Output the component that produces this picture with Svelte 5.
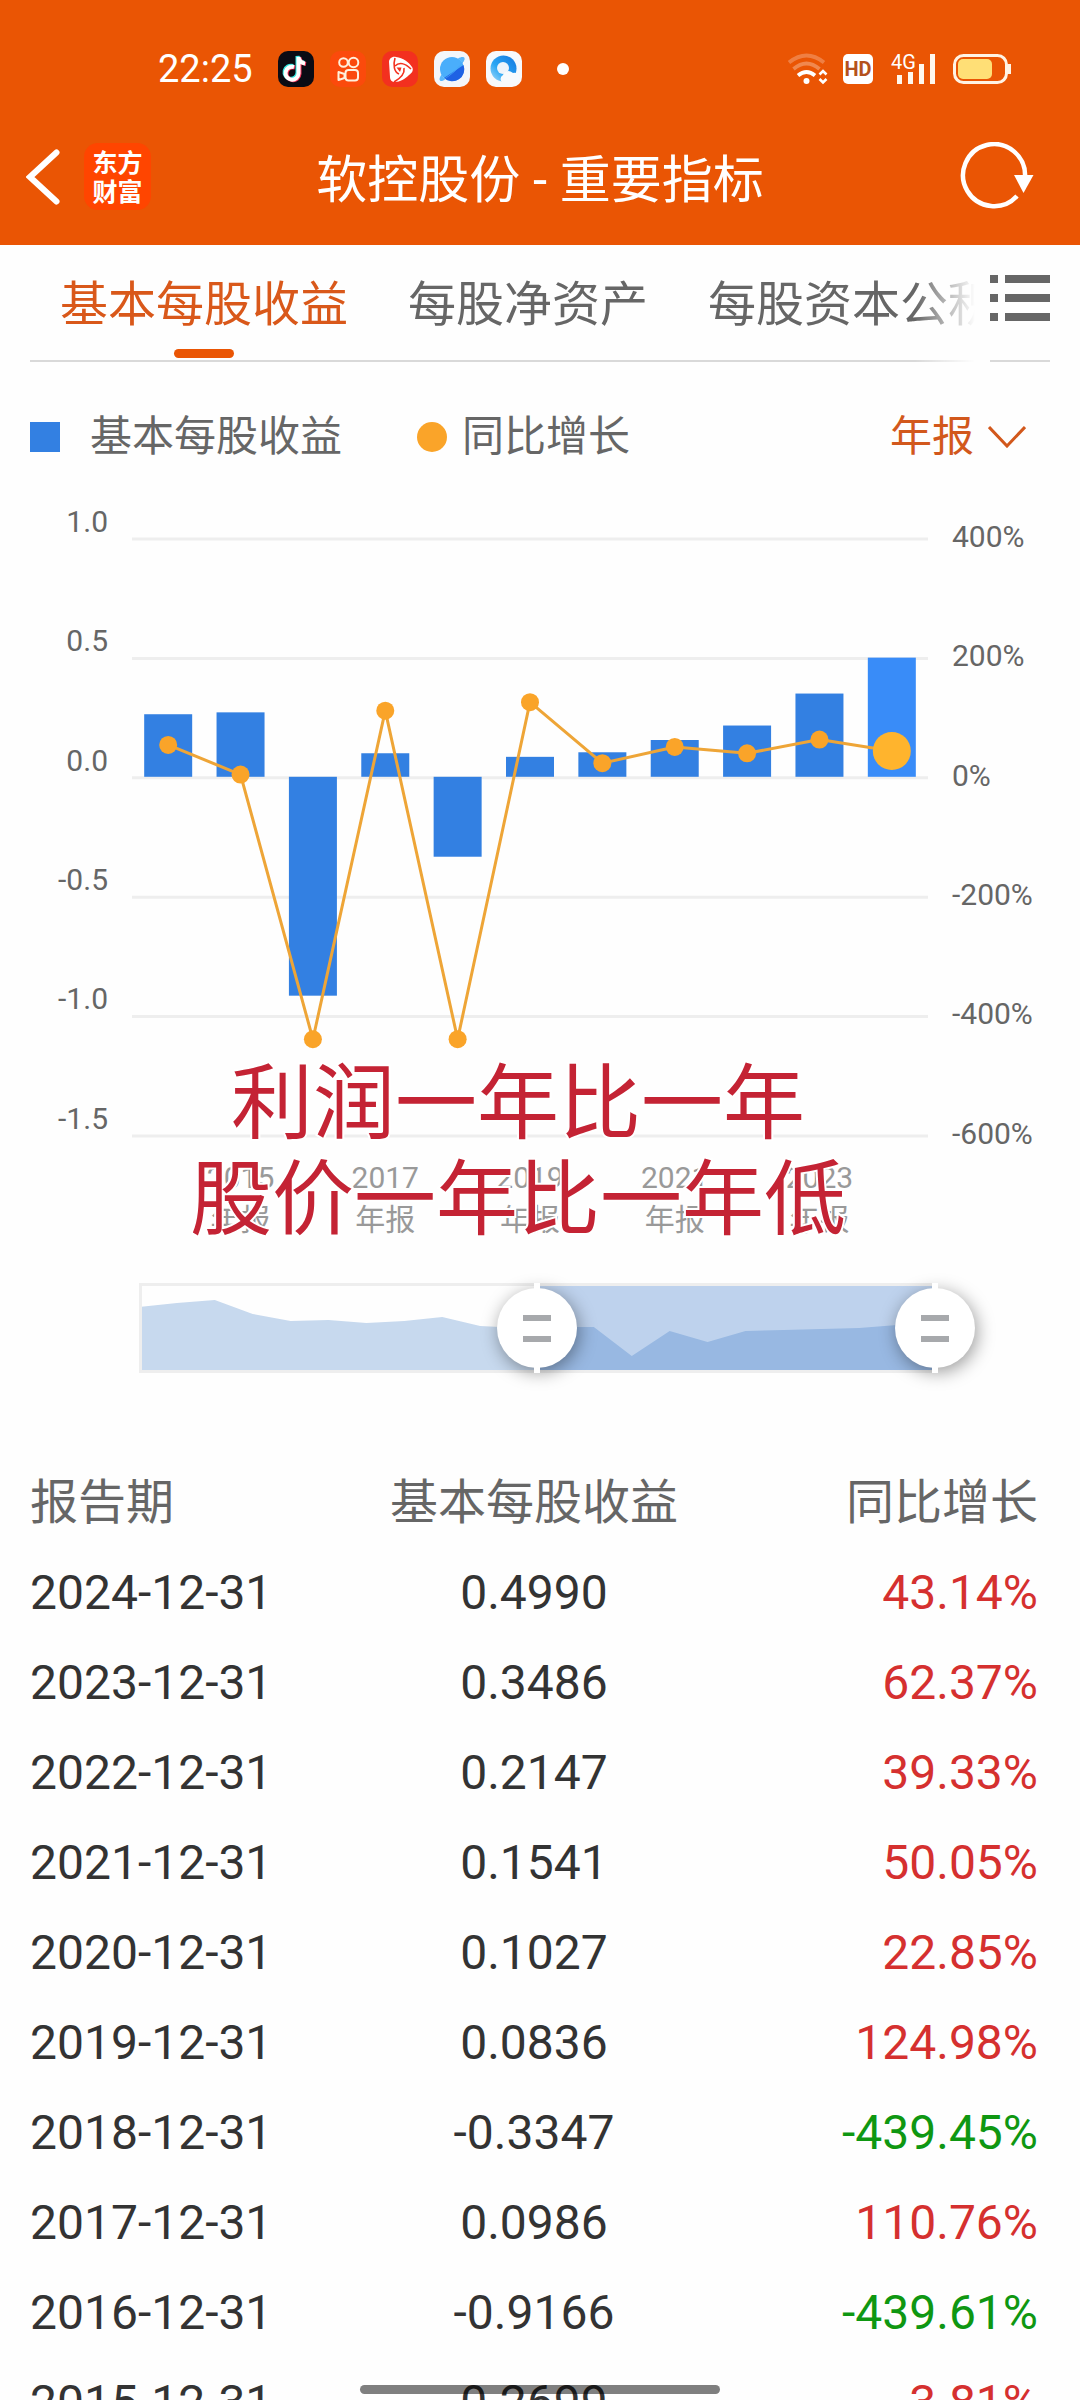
<script>
  const tabs = ['基本每股收益', '每股净资产', '每股资本公积金'];
  let active = $state(0);
  let period = $state('年报');
  let from = $state(50);
  let to = $state(100);

  const series = [
    { year: 2014, eps: 0.262, growth: 53.3 },
    { year: 2015, eps: 0.2699, growth: 3.81 },
    { year: 2016, eps: -0.9166, growth: -439.61 },
    { year: 2017, eps: 0.0986, growth: 110.76 },
    { year: 2018, eps: -0.3347, growth: -439.45 },
    { year: 2019, eps: 0.0836, growth: 124.98 },
    { year: 2020, eps: 0.1027, growth: 22.85 },
    { year: 2021, eps: 0.1541, growth: 50.05 },
    { year: 2022, eps: 0.2147, growth: 39.33 },
    { year: 2023, eps: 0.3486, growth: 62.37 },
    { year: 2024, eps: 0.499, growth: 43.14 }
  ];
  const rows = series.slice(1).reverse();
  const epsTicks = ['1.0', '0.5', '0.0', '-0.5', '-1.0', '-1.5'];
  const growthTicks = ['400%', '200%', '0%', '-200%', '-400%', '-600%'];

  // Vertical scale of the plot: one grid step is 0.5 of EPS or 200% of growth.
  const step = 119.4;
  const zero = 2 * step + 1;
  const epsY = (v) => zero - v * 2 * step;
  const growthY = (v) => zero - (v / 200) * step;
  const centre = (i) => ((i + 0.5) / series.length) * 100;

  const overview = [24, 20, 17, 31, 38, 37, 40, 38, 34, 43, 45, 44, 44, 73, 48, 59, 48, 47, 46, 45, 42, 37];
  const areaPath =
    'M0 90 ' + overview.map((y, i) => `L${i} ${y}`).join(' ') + ` L${overview.length - 1} 90 Z`;
</script>

<div class="app">
  <header>
    <div class="status">
      <time>22:25</time>
      <div class="apps">
        <svg viewBox="0 0 36 36" aria-hidden="true">
          <rect width="36" height="36" rx="10" fill="#0b0b14" />
          <g fill="none" stroke-width="4">
            <path d="M18 15.500a6.500 6.500 0 1 0 4.500 6.500V5.500c.5 4 3 6 6.500 6.500" transform="translate(-3 -0.500)" stroke="#35e6e0" />
            <path d="M18 15.500a6.500 6.500 0 1 0 4.500 6.500V5.500c.5 4 3 6 6.500 6.500" transform="translate(-1 1)" stroke="#f5345c" />
            <path d="M18 15.500a6.500 6.500 0 1 0 4.500 6.500V5.500c.5 4 3 6 6.500 6.500" transform="translate(-2 0.500)" stroke="#fff" />
          </g>
        </svg>
        <svg viewBox="0 0 36 36" aria-hidden="true">
          <rect width="36" height="36" rx="10" fill="#fb4a0c" />
          <g fill="none" stroke="#fff0dc" stroke-width="2">
            <circle cx="13.500" cy="11.500" r="4.300" />
            <circle cx="23.500" cy="11.500" r="4.800" />
            <rect x="15.500" y="19" width="12.500" height="10.500" rx="3" />
            <path d="M14.500 23l-6-2v8l6-2z" stroke-linejoin="round" />
          </g>
        </svg>
        <svg viewBox="0 0 36 36" aria-hidden="true">
          <rect width="36" height="36" rx="10" fill="#f3301f" />
          <path d="M7 11c0-3 3-6 7-5 7 1 13 5 16 10 2 3 0 6-3 8-4 4-9 7-14 7-3 0-5-2-5-5z" fill="#fff" />
          <g fill="none" stroke="#f3301f" stroke-width="1.600">
            <path d="M13 15c4-4 10-3 16 3" />
            <path d="M22 17c1 6-3 10-10 14" />
            <path d="M17 23c-5-2-6-9-4-16" />
          </g>
          <path d="M14.500 16.500l5 0-1.500 4.500z" fill="#f3301f" />
        </svg>
        <svg viewBox="0 0 36 36" aria-hidden="true">
          <rect width="36" height="36" rx="10" fill="#f4f6fa" />
          <circle cx="18" cy="18" r="12" fill="#4aaefb" />
          <path d="M29.500 14A12 12 0 0 1 10 27z" fill="#1f62e4" />
          <path d="M30 7c1 3-4 9-11 15S7 30 6 29c2 0 6-2 12-7S29 11 30 7z" fill="#45a8fa" />
          <path d="M24 7.500c3-2 6-2 6.500-.5s-.5 3-2 5zM7.500 23.500c-2 3-2.500 5-1.500 6s3 .5 5-1z" fill="#5bb7fb" />
        </svg>
        <svg viewBox="0 0 36 36" aria-hidden="true">
          <defs>
            <linearGradient id="ring" x1="1" y1="0" x2="0" y2="1">
              <stop offset="0.200" stop-color="#1b86e6" />
              <stop offset="0.600" stop-color="#2aa6f4" />
              <stop offset="1" stop-color="#a9dcfa" />
            </linearGradient>
          </defs>
          <rect width="36" height="36" rx="10" fill="#f7f9fc" />
          <circle cx="17.500" cy="17.500" r="13" fill="url(#ring)" />
          <circle cx="17" cy="17" r="6" fill="#eef4fb" />
          <path d="M17 32a4.500 4.500 0 0 1 0-8 6 6 0 0 1 10-2 5 5 0 0 1 3 10z" fill="#f7fafd" />
        </svg>
      </div>
      <span class="dot"></span>
      <div class="system">
        <svg class="wifi" viewBox="0 0 40 32" aria-hidden="true">
          <g fill="none" stroke="#fff" stroke-width="3.800">
            <path d="M1 9.500q17.500-14 35 0" opacity=".25" />
            <path d="M5.500 16q13-11 26 0" opacity=".3" />
            <path d="M10 22.500q8.500-7 17 0" />
            <path d="M31.500 21.500l3.500-3.500 3.500 3.500M31.500 26l3.500 3.500 3.500-3.500" stroke-width="2.600" />
          </g>
          <circle cx="18.500" cy="28" r="3" fill="#fff" />
        </svg>
        <span class="hd">HD</span>
        <span class="cell">
          <small>4G</small>
          <svg viewBox="0 0 44 30" aria-hidden="true">
            <path d="M8.500 30v-9M19.500 30V18M30.500 30V10M41.500 30V0" stroke="#fff8ee" stroke-width="5" />
          </svg>
        </span>
        <svg class="battery" viewBox="0 0 58 32" aria-hidden="true">
          <rect x="1.500" y="2.500" width="52" height="27" rx="9" fill="none" stroke="#fff3e4" stroke-width="3" />
          <rect x="5" y="6" width="34" height="20" rx="5" fill="#ffdf76" />
          <path d="M56.500 11v10" stroke="#fff3e4" stroke-width="3" />
        </svg>
      </div>
    </div>
    <div class="bar">
      <div class="lead">
        <button class="back" aria-label="返回">
          <svg viewBox="0 0 34 56" aria-hidden="true">
            <path d="M30.500 3.500L4 28l26.500 24.500" fill="none" stroke="#fff" stroke-width="6" stroke-linecap="round" stroke-linejoin="miter" />
          </svg>
        </button>
        <span class="logo">东方<br />财富</span>
      </div>
      <h1>软控股份 - 重要指标</h1>
      <button class="refresh" aria-label="刷新">
        <svg viewBox="0 0 74 70" aria-hidden="true">
          <path d="M57 54A31 31 0 1 1 65 35" fill="none" stroke="#fff" stroke-width="4.500" />
          <path d="M54 33h19.500L63.500 51z" fill="#fff" />
        </svg>
      </button>
    </div>
  </header>

  <nav>
    <div class="tabs">
      {#each tabs as tab, i}
        <button class:active={active === i} onclick={() => (active = i)}>{tab}</button>
      {/each}
    </div>
    <button class="menu" aria-label="全部指标">
      <svg viewBox="0 0 60 46" aria-hidden="true">
        <path d="M0 4h8M15 4h45M0 23h8M15 23h45M0 42h8M15 42h45" stroke="#666" stroke-width="8" />
      </svg>
    </button>
  </nav>

  <main>
    <div class="legend">
      <span class="square"></span>
      <span class="name">基本每股收益</span>
      <span class="round"></span>
      <span>同比增长</span>
      <label class="period">
        <select aria-label="报告类型" bind:value={period}>
          <option>年报</option>
          <option>中报</option>
          <option>季报</option>
        </select>
        <svg viewBox="0 0 38 22" aria-hidden="true">
          <path d="M1 1l18 19L37 1" fill="none" stroke="#d2581c" stroke-width="3" />
        </svg>
      </label>
    </div>

    <section class="chart">
      <div class="ticks left">
        {#each epsTicks as t}<span>{t}</span>{/each}
      </div>
      <div class="plot">
        <svg class="canvas" role="img" aria-label="基本每股收益与同比增长">
          {#each epsTicks as _, i}
            <line x1="0" x2="100%" y1={i * step + 2} y2={i * step + 2} stroke="#eee" stroke-width="3" />
          {/each}
          {#each series as d, i}
            <rect
              class:latest={i === series.length - 1}
              class="column"
              x="{centre(i)}%"
              y={Math.min(epsY(d.eps), zero)}
              width="48"
              height={Math.abs(epsY(d.eps) - zero)}
            />
          {/each}
          {#each series.slice(1) as d, i}
            <line
              x1="{centre(i)}%"
              y1={growthY(series[i].growth)}
              x2="{centre(i + 1)}%"
              y2={growthY(d.growth)}
              stroke="#eea537"
              stroke-width="3"
              stroke-linecap="round"
            />
          {/each}
          {#each series as d, i}
            {#if i === series.length - 1}
              <circle cx="{centre(i)}%" cy={growthY(d.growth)} r="19" fill="#ffb42d" />
            {:else}
              <circle cx="{centre(i)}%" cy={growthY(d.growth)} r="9" fill="#faa429" />
            {/if}
          {/each}
        </svg>
        <div class="years">
          {#each series as d, i}
            <span>{#if i % 2 === 1}{d.year}<br />年报{/if}</span>
          {/each}
        </div>
      </div>
      <div class="ticks right">
        {#each growthTicks as t}<span>{t}</span>{/each}
      </div>
      <p class="note">利润一年比一年<br />股价一年比一年低</p>
    </section>

    <div class="range">
      <svg viewBox="0 0 21 90" preserveAspectRatio="none" aria-hidden="true">
        <path d={areaPath} fill="#c7d9ee" />
      </svg>
      <div class="window" style="left: {from}%; right: {100 - to}%"></div>
      <div class="frame"></div>
      <input type="range" min="0" max="100" bind:value={from} aria-label="开始" />
      <input type="range" min="0" max="100" bind:value={to} aria-label="结束" />
      <i class="stem" style="left: {from}%"></i>
      <i class="stem" style="left: {to}%"></i>
    </div>

    <table>
      <thead>
        <tr><th>报告期</th><th>基本每股收益</th><th>同比增长</th></tr>
      </thead>
      <tbody>
        {#each rows as r}
          <tr>
            <td>{r.year}-12-31</td>
            <td>{r.eps.toFixed(4)}</td>
            <td class={r.growth < 0 ? 'down' : 'up'}>{r.growth.toFixed(2)}%</td>
          </tr>
        {/each}
      </tbody>
    </table>
  </main>
  <div class="home"></div>
</div>

<style>
  :global(body) {
    background: #fefefe;
  }
  .app {
    position: relative;
    height: 100vh;
    overflow: hidden;
    font-family: Roboto, 'Noto Sans CJK SC', sans-serif;
    color: #666;
  }
  svg {
    display: block;
  }
  button,
  select {
    border: 0;
    padding: 0;
    margin: 0;
    background: none;
    font: inherit;
    color: inherit;
  }

  header {
    background: #ea5504;
    color: #fff;
  }
  .status {
    display: flex;
    align-items: center;
    height: 78px;
    padding: 30px 69px 0 158px;
  }
  time {
    font-size: 38px;
    line-height: 40px;
    width: 120px;
  }
  .apps {
    display: flex;
    gap: 16px;
  }
  .apps svg {
    width: 36px;
    height: 36px;
  }
  .dot {
    width: 12px;
    height: 12px;
    border-radius: 50%;
    background: #fff;
    margin-left: 35px;
  }
  .system {
    display: flex;
    align-items: center;
    margin-left: auto;
  }
  .wifi {
    width: 40px;
    height: 32px;
    margin-right: 15px;
  }
  .hd {
    width: 30px;
    height: 30px;
    border-radius: 5px;
    background: #fff;
    color: #b4521c;
    font-size: 20px;
    font-weight: 700;
    line-height: 30px;
    text-align: center;
    margin-right: 18px;
  }
  .cell {
    position: relative;
    margin-right: 18px;
  }
  .cell svg {
    width: 44px;
    height: 30px;
  }
  .cell small {
    position: absolute;
    left: 0;
    top: -2px;
    font-size: 20px;
    line-height: 20px;
    font-weight: 400;
  }
  .battery {
    width: 58px;
    height: 32px;
  }

  .bar {
    display: grid;
    grid-template-columns: 1fr auto 1fr;
    align-items: center;
    height: 137px;
    padding: 0 46px 0 26px;
  }
  .lead {
    display: flex;
    align-items: center;
    gap: 24px;
  }
  .back svg {
    width: 34px;
    height: 56px;
  }
  .logo {
    width: 67px;
    height: 67px;
    box-sizing: border-box;
    padding-top: 6px;
    border-radius: 14px;
    background: #ff4500;
    font-size: 25px;
    font-weight: 700;
    line-height: 29px;
    text-align: center;
  }
  h1 {
    margin: 0;
    font-size: 51px;
    line-height: 60px;
    font-weight: 400;
    padding: 9px 0 0 20px;
  }
  .refresh {
    justify-self: end;
  }
  .refresh svg {
    width: 74px;
    height: 70px;
  }

  nav {
    display: flex;
    gap: 15px;
    padding: 0 30px;
  }
  .tabs {
    flex: 1;
    min-width: 0;
    display: flex;
    gap: 60px;
    padding-left: 30px;
    height: 115px;
    overflow: hidden;
    border-bottom: 2px solid #d9d9d9;
    mask-image: linear-gradient(to left, transparent 0, #000 60px);
  }
  .tabs button {
    position: relative;
    flex: none;
    font-size: 48px;
    line-height: 110px;
    padding-top: 5px;
  }
  .tabs .active {
    color: #d9581a;
  }
  .tabs .active::after {
    content: '';
    position: absolute;
    left: 50%;
    bottom: 2px;
    width: 60px;
    height: 9px;
    margin-left: -30px;
    border-radius: 5px;
    background: #ea5504;
  }
  .menu {
    height: 117px;
    padding-bottom: 10px;
    border-bottom: 2px solid #d9d9d9;
  }
  .menu svg {
    width: 60px;
    height: 46px;
  }

  .legend {
    display: flex;
    align-items: center;
    height: 60px;
    margin-top: 45px;
    padding: 0 54px 0 30px;
    font-size: 42px;
    line-height: 60px;
  }
  .square {
    width: 30px;
    height: 30px;
    margin-right: 30px;
    background: #3380e2;
  }
  .name {
    margin-right: 75px;
  }
  .round {
    width: 30px;
    height: 30px;
    margin-right: 15px;
    border-radius: 50%;
    background: #faa429;
  }
  .period {
    display: flex;
    align-items: center;
    gap: 13px;
    margin-left: auto;
    color: #d2581c;
  }
  select {
    appearance: none;
  }
  .period svg {
    width: 38px;
    height: 22px;
  }

  .chart {
    position: relative;
    display: grid;
    grid-template-columns: 108px minmax(0, 1fr) 128px;
    gap: 24px;
    margin-top: 70px;
    font-size: 30px;
  }
  .ticks {
    display: grid;
    grid-template-rows: repeat(6, 1fr);
    height: 716px;
  }
  .ticks span {
    line-height: 36px;
    margin-top: -18px;
  }
  .left {
    text-align: right;
    margin-top: -15px;
  }
  .canvas {
    width: 100%;
    height: 600px;
    overflow: visible;
  }
  .column {
    fill: #3380e2;
    transform: translateX(-24px);
  }
  .latest {
    fill: #398cf8;
  }
  .years {
    display: grid;
    grid-template-columns: repeat(11, 1fr);
    height: 84px;
    margin-top: 20px;
    line-height: 42px;
    color: #999;
  }
  .years span {
    display: block;
    justify-self: center;
    text-align: center;
  }
  .note {
    position: absolute;
    inset: 519px 44px auto 0;
    margin: 0;
    font-size: 82px;
    line-height: 96px;
    font-weight: 400;
    text-align: center;
    color: #c42334;
    -webkit-text-stroke: 4px #fff;
    paint-order: stroke fill;
  }

  .range {
    position: relative;
    height: 90px;
    margin: 30px 145px 85px 139px;
  }
  .range > svg {
    width: 100%;
    height: 90px;
  }
  .frame {
    position: absolute;
    inset: 0;
    border: 3px solid #eee;
  }
  .window {
    position: absolute;
    top: 0;
    bottom: 0;
    background: rgba(44, 110, 200, 0.3);
  }
  .stem {
    position: absolute;
    top: 0;
    bottom: 0;
    width: 6px;
    margin-left: -3px;
    background: linear-gradient(#fff 8px, transparent 8px, transparent 82px, #fff 82px);
    pointer-events: none;
  }
  .range input {
    position: absolute;
    left: -40px;
    top: 5px;
    width: calc(100% + 80px);
    height: 80px;
    margin: 0;
    appearance: none;
    background: none;
    pointer-events: none;
  }
  .range input::-webkit-slider-thumb {
    appearance: none;
    width: 80px;
    height: 80px;
    border-radius: 50%;
    background:
      linear-gradient(#a7a9ac, #a7a9ac) 26px 27px / 28px 6px no-repeat,
      linear-gradient(#a7a9ac, #a7a9ac) 26px 48px / 28px 6px no-repeat,
      #fff;
    box-shadow: 2px 4px 18px rgba(0, 0, 0, 0.4);
    pointer-events: auto;
  }

  table {
    width: 100%;
    table-layout: fixed;
    border-collapse: collapse;
    font-size: 48px;
    line-height: 60px;
    color: #333;
  }
  th,
  td {
    height: 90px;
    padding: 0;
    font-weight: 400;
    text-align: center;
    white-space: nowrap;
  }
  th {
    color: #666;
  }
  th:first-child,
  td:first-child {
    width: 318px;
    padding-left: 30px;
    text-align: left;
  }
  th:last-child,
  td:last-child {
    width: 318px;
    padding-right: 42px;
    text-align: right;
  }
  .up {
    color: #d5302f;
  }
  .down {
    color: #0f9712;
  }
  .home {
    position: absolute;
    left: 50%;
    bottom: 6px;
    width: 360px;
    height: 9px;
    margin-left: -180px;
    border-radius: 5px;
    background: rgba(0, 0, 0, 0.5);
  }
</style>
